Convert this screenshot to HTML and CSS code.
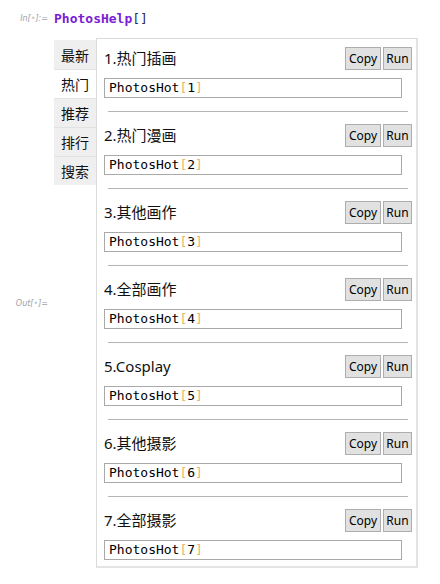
FILE: index.html
```html
<!DOCTYPE html>
<html>
<head>
<meta charset="utf-8">
<link rel="stylesheet" href="styles.css">
</head>
<body>
<div class="in-row">
  <span class="in-label">In[<span class="dot">•</span>]:=</span>
  <span class="code"><span class="fn">PhotosHelp</span><span class="br">[]</span></span>
</div>
<div class="out-row">
  <span class="out-label">Out[<span class="dot">•</span>]=</span>
  <div class="tabview">
    <div class="tabs">
      <div class="tab">最新</div>
      <div class="tab active">热门</div>
      <div class="tab">推荐</div>
      <div class="tab">排行</div>
      <div class="tab">搜索</div>
    </div>
    <div class="panel">
      <div class="item">
        <div class="head"><span class="title">1.热门插画</span><span class="btns"><span class="btn copy">Copy</span><span class="btn run">Run</span></span></div>
        <div class="input">PhotosHot<span class="bk">[</span>1<span class="bk">]</span></div>
      </div>
      <div class="sep"></div>
      <div class="item">
        <div class="head"><span class="title">2.热门漫画</span><span class="btns"><span class="btn copy">Copy</span><span class="btn run">Run</span></span></div>
        <div class="input">PhotosHot<span class="bk">[</span>2<span class="bk">]</span></div>
      </div>
      <div class="sep"></div>
      <div class="item">
        <div class="head"><span class="title">3.其他画作</span><span class="btns"><span class="btn copy">Copy</span><span class="btn run">Run</span></span></div>
        <div class="input">PhotosHot<span class="bk">[</span>3<span class="bk">]</span></div>
      </div>
      <div class="sep"></div>
      <div class="item">
        <div class="head"><span class="title">4.全部画作</span><span class="btns"><span class="btn copy">Copy</span><span class="btn run">Run</span></span></div>
        <div class="input">PhotosHot<span class="bk">[</span>4<span class="bk">]</span></div>
      </div>
      <div class="sep"></div>
      <div class="item">
        <div class="head"><span class="title">5.Cosplay</span><span class="btns"><span class="btn copy">Copy</span><span class="btn run">Run</span></span></div>
        <div class="input">PhotosHot<span class="bk">[</span>5<span class="bk">]</span></div>
      </div>
      <div class="sep"></div>
      <div class="item">
        <div class="head"><span class="title">6.其他摄影</span><span class="btns"><span class="btn copy">Copy</span><span class="btn run">Run</span></span></div>
        <div class="input">PhotosHot<span class="bk">[</span>6<span class="bk">]</span></div>
      </div>
      <div class="sep"></div>
      <div class="item">
        <div class="head"><span class="title">7.全部摄影</span><span class="btns"><span class="btn copy">Copy</span><span class="btn run">Run</span></span></div>
        <div class="input">PhotosHot<span class="bk">[</span>7<span class="bk">]</span></div>
      </div>
    </div>
  </div>
</div>
</body>
</html>
```
FILE: styles.css
```css
html, body {
  margin: 0;
  padding: 0;
  background: #fff;
}
body {
  font-family: "Noto Sans", "Noto Sans CJK SC", sans-serif;
  color: #000;
}
.in-row {
  display: flex;
  align-items: center;
  height: 38px;
  padding-top: 0;
}
.in-label {
  width: 48px;
  text-align: right;
  padding-right: 6px;
  font-family: "DejaVu Sans", sans-serif;
  font-style: italic;
  font-size: 8px;
  color: #a0a0a8;
  margin-top: -1px;
}
.dot {
  color: #c8c8d0;
}
.code {
  font-family: "DejaVu Sans Mono", monospace;
  font-weight: bold;
  font-size: 13px;
  margin-top: -2px;
}
.fn {
  color: #7a1cd4;
}
.br {
  color: #1f2e5c;
  font-weight: normal;
}
.out-row {
  display: flex;
  align-items: center;
}
.out-label {
  width: 48px;
  text-align: right;
  padding-right: 6px;
  font-family: "DejaVu Sans", sans-serif;
  font-style: italic;
  font-size: 8px;
  color: #a0a0a8;
}
.tabview {
  display: flex;
  align-items: flex-start;
}
.tabs {
  margin-top: 2px;
  width: 42px;
  display: flex;
  flex-direction: column;
}
.tab {
  height: 29px;
  box-sizing: border-box;
  background: #efefef;
  border-top: 1px solid #e2e2e2;
  display: flex;
  align-items: center;
  justify-content: center;
  font-family: "Noto Sans CJK SC", sans-serif;
  font-size: 14px;
  color: #111;
}
.tab:first-child {
  border-top: none;
}
.tab.active {
  background: #fff;
}
.panel {
  width: 322px;
  box-sizing: border-box;
  border: 1px solid #dadada;
  border-right: 2px solid #e4e4e4;
  border-bottom: 2px solid #e4e4e4;
  padding: 8px 4px 6px 7px;
}
.head {
  display: flex;
  justify-content: space-between;
  align-items: center;
  height: 23px;
}
.title {
  font-family: "Noto Sans", "Noto Sans CJK SC", sans-serif;
  font-size: 15px;
  color: #111;
  margin-top: -2px;
}
.btns {
  display: flex;
  gap: 2px;
}
.btn {
  height: 23px;
  box-sizing: border-box;
  border: 1px solid #adadad;
  background: #e1e1e1;
  font-family: "Noto Sans", sans-serif;
  font-size: 12px;
  display: flex;
  align-items: center;
  justify-content: center;
  color: #000;
}
.btn.copy {
  width: 36px;
}
.btn.run {
  width: 29px;
}
.input {
  margin-top: 8px;
  width: 298px;
  height: 20px;
  box-sizing: border-box;
  border: 1px solid #a9a9a9;
  padding-left: 4px;
  font-family: "DejaVu Sans Mono", monospace;
  font-size: 13px;
  line-height: 18px;
  color: #000;
}
.bk {
  color: #e8b46a;
}
.sep {
  margin: 13px 0 12px 4px;
  width: 300px;
  height: 1px;
  background: #b4b4b4;
}
```
